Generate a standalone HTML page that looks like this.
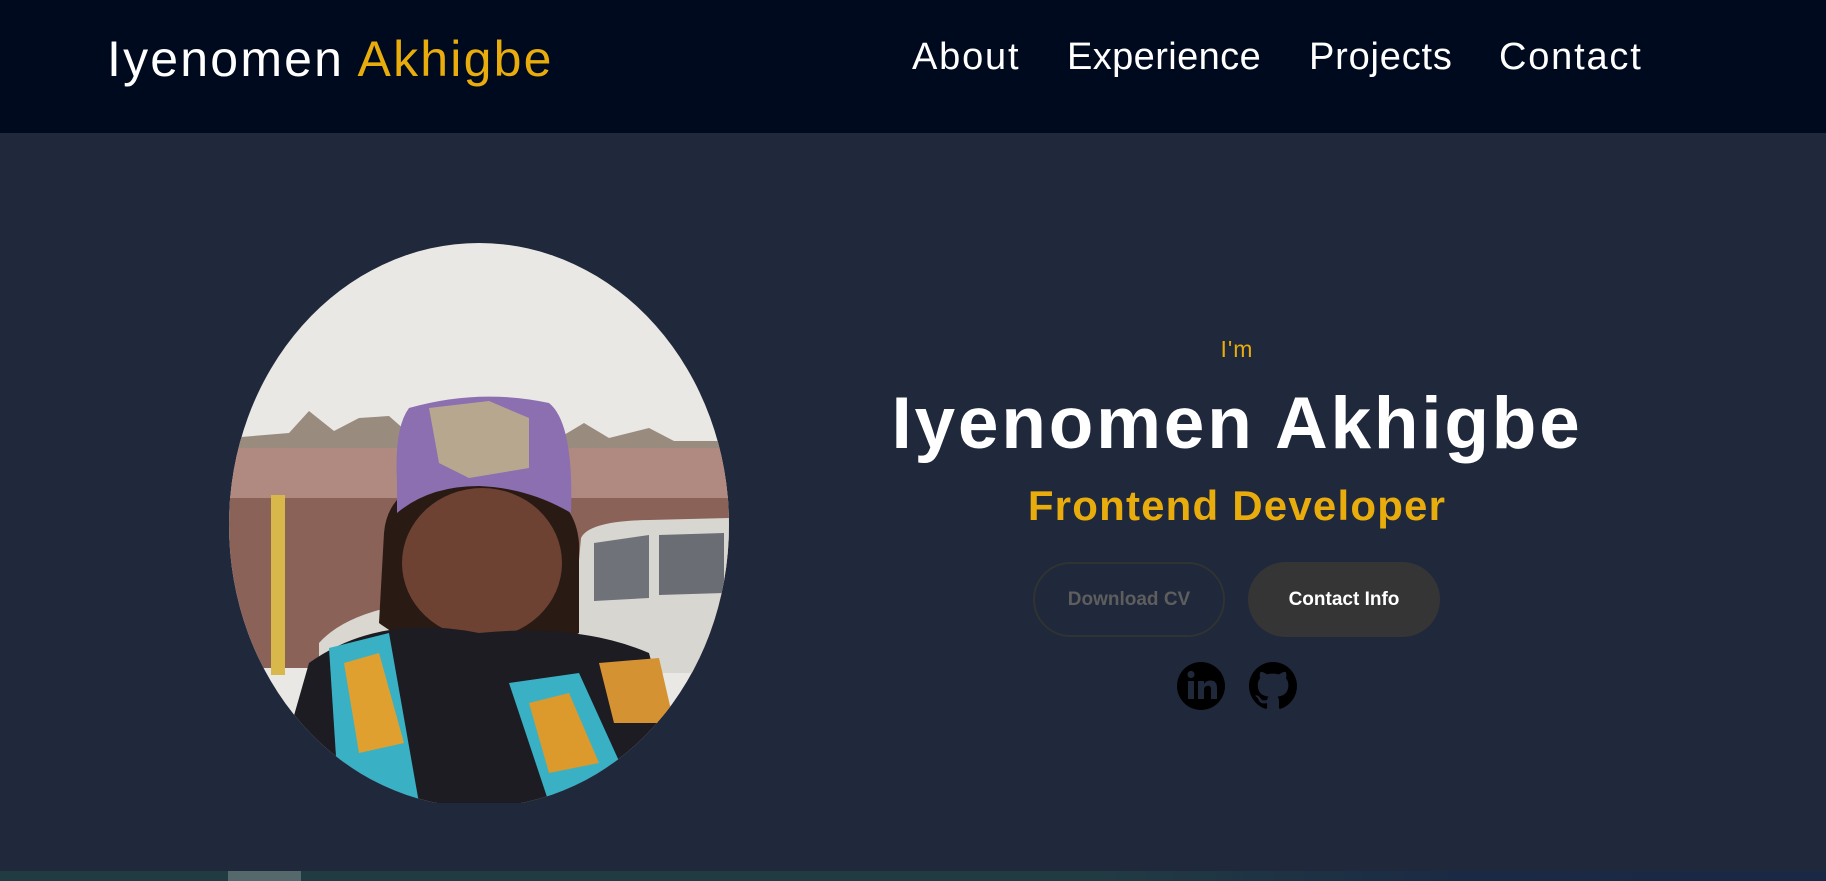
<!DOCTYPE html>
<html><head><meta charset="utf-8"><style>
*{margin:0;padding:0;box-sizing:border-box}
body{width:1826px;height:881px;overflow:hidden;background:#20283b;font-family:"Liberation Sans",sans-serif;position:relative}
header{position:absolute;left:0;top:0;width:1826px;height:133px;background:#000a1e}
.logo{position:absolute;left:107px;top:30px;font-size:50px;color:#fff;white-space:nowrap;letter-spacing:2.2px}
.logo span{color:#e8ac0c}
nav a{position:absolute;top:36px;font-size:38px;color:#fff;text-decoration:none;white-space:nowrap;letter-spacing:1.8px}
.t{position:absolute;left:0;width:2474px;text-align:center;white-space:nowrap}
.btn{position:absolute;top:562px;width:192px;height:75px;border-radius:38px;font-weight:bold;font-size:19px;display:flex;align-items:center;justify-content:center}
.strip{position:absolute;left:0;top:871px;width:1826px;height:10px;background:linear-gradient(90deg,#213b43 0%,#213b43 60%,#1b2a44 80%,#1a2745 100%)}
</style></head><body>
<header>
<div class="logo">Iyenomen <span>Akhigbe</span></div>
<nav>
<a style="left:912px">About</a>
<a style="left:1067px;letter-spacing:0.4px">Experience</a>
<a style="left:1309px;letter-spacing:0.8px">Projects</a>
<a style="left:1499px">Contact</a>
</nav>
</header>

<svg style="position:absolute;left:229px;top:243px" width="500" height="560" viewBox="0 0 500 560">
<defs><clipPath id="c"><ellipse cx="250" cy="282" rx="250" ry="282"/></clipPath></defs>
<g clip-path="url(#c)">
<rect width="500" height="560" fill="#e9e8e4"/>
<path d="M0 195 L60 190 L80 168 L105 188 L130 175 L160 173 L185 195 L330 195 L355 180 L380 195 L420 185 L445 198 L500 198 L500 265 L0 255Z" fill="#9a8b7f"/>
<rect x="0" y="205" width="500" height="55" fill="#b08a80"/>
<rect x="0" y="255" width="500" height="170" fill="#8a6258"/>
<rect x="42" y="252" width="14" height="180" fill="#d8b84a"/>
<path d="M352 295 Q360 278 420 277 L500 275 L500 430 L340 430Z" fill="#d8d6d0"/>
<path d="M365 300 L420 292 L420 355 L365 358Z" fill="#6f7278"/>
<path d="M430 292 L495 290 L495 350 L430 352Z" fill="#6a6d73"/>
<path d="M90 400 Q130 355 260 355 L340 380 L340 440 L90 440Z" fill="#d9d7d0"/>
<path d="M155 290 Q160 230 250 235 Q345 235 350 300 L350 390 Q300 420 250 415 Q190 410 150 380Z" fill="#2a1a14"/>
<ellipse cx="253" cy="320" rx="80" ry="75" fill="#6e4232"/>
<path d="M168 240 Q165 185 180 165 Q250 145 320 160 Q345 180 342 270 Q300 245 250 243 Q200 243 168 270Z" fill="#8c6fb0"/>
<path d="M200 165 L260 158 L300 175 L300 225 L240 235 L210 220Z" fill="#b8a78f"/>
<path d="M80 420 Q150 370 250 390 Q350 380 420 410 L460 560 L40 560Z" fill="#1d1c22"/>
<path d="M100 405 L160 390 L190 560 L110 560Z" fill="#3ab0c4"/>
<path d="M115 420 L150 410 L175 500 L130 510Z" fill="#e0a030"/>
<path d="M280 440 L350 430 L400 540 L320 560Z" fill="#3ab0c4"/>
<path d="M300 460 L340 450 L370 520 L320 530Z" fill="#dc9a2c"/>
<path d="M370 420 L430 415 L445 480 L385 480Z" fill="#d49232"/>
</g>
<rect x="0" y="0" width="165" height="4" fill="#20283b"/>
<rect x="335" y="0" width="165" height="4" fill="#20283b"/>
</svg>

<div class="t" style="top:336px;font-size:23px;color:#e8ac0c;letter-spacing:1px">I'm</div>
<div class="t" style="top:382px;font-size:73px;font-weight:bold;color:#fff;letter-spacing:2.8px">Iyenomen Akhigbe</div>
<div class="t" style="top:482px;font-size:42px;font-weight:bold;color:#e8ac0c;letter-spacing:1.2px">Frontend Developer</div>

<div class="btn" style="left:1033px;border:2px solid #2f3332;color:#5e5e5e">Download CV</div>
<div class="btn" style="left:1248px;background:#353535;color:#fff">Contact Info</div>

<svg style="position:absolute;left:1177px;top:662px" width="48" height="48" viewBox="0 0 48 48">
<circle cx="24" cy="24" r="24" fill="#000"/>
<rect x="11" y="19" width="6" height="18" fill="#20283b"/>
<circle cx="14" cy="12.5" r="3.6" fill="#20283b"/>
<path d="M21 19h6v3c1.5-2.4 3.7-3.5 6.5-3.5 4.5 0 6.5 2.8 6.5 7.5V37h-6V27.5c0-2.5-1-3.8-3-3.8s-4 1.4-4 4.2V37h-6Z" fill="#20283b"/>
</svg>
<svg style="position:absolute;left:1249px;top:662px" width="48" height="48" viewBox="0 0 16 16">
<path fill="#000" d="M8 0C3.580 0 0 3.580 0 8c0 3.54 2.29 6.53 5.47 7.59.4.07.55-.17.55-.38 0-.19-.01-.82-.01-1.490-2.010.37-2.53-.49-2.69-.94-.09-.23-.48-.94-.82-1.13-.28-.15-.68-.52-.01-.53.63-.01 1.08.58 1.230.82.72 1.21 1.87.87 2.33.66.07-.52.28-.87.51-1.07-1.78-.2-3.64-.89-3.64-3.950 0-.87.31-1.59.82-2.15-.08-.2-.36-1.02.08-2.12 0 0 .67-.21 2.2.82.64-.18 1.32-.27 2-.27.68 0 1.36.09 2 .27 1.53-1.04 2.2-.82 2.2-.82.44 1.1.16 1.92.08 2.12.51.56.82 1.27.82 2.15 0 3.07-1.87 3.75-3.65 3.95.29.25.54.73.54 1.48 0 1.07-.01 1.93-.01 2.2 0 .21.15.46.55.38A8.013 8.013 0 0016 8c0-4.420-3.580-8-8-8z"/>
</svg>

<div class="strip"></div>
<div style="position:absolute;left:228px;top:871px;width:73px;height:10px;background:#55686c"></div>
</body></html>
